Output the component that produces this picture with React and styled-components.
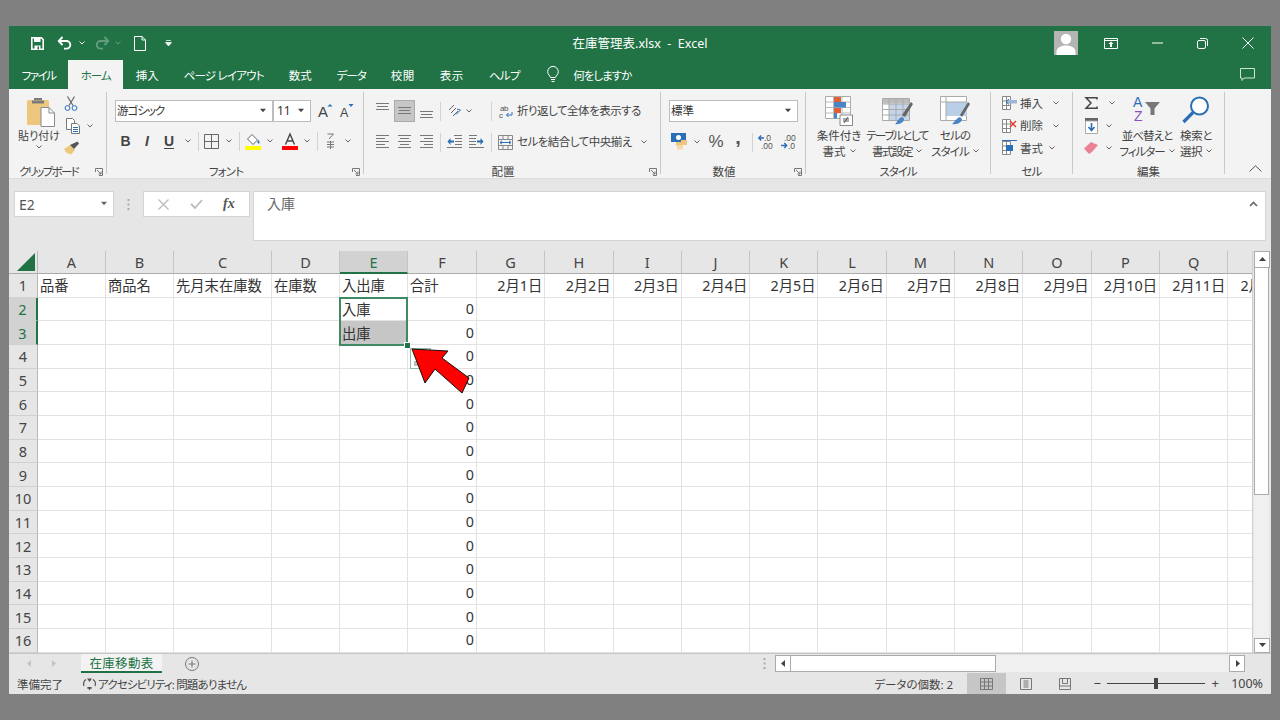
import React from 'react';
import styled, { createGlobalStyle } from 'styled-components';

const GREEN = '#217346';
const INK = '#444';
const UI_FONT = '"Noto Sans", "Noto Sans CJK JP", sans-serif';

const GlobalStyle = createGlobalStyle`
  html, body { margin: 0; height: 100%; background: #808080; }
  * { box-sizing: border-box; }
  body { font-family: ${UI_FONT}; font-feature-settings: "palt"; color: ${INK}; }
`;

const Page = styled.div`
  width: 1280px;
  height: 720px;
  padding: 26px 9px;
  background: #808080;
`;
const Excel = styled.div`
  width: 1262px;
  height: 668px;
  display: flex;
  flex-direction: column;
  overflow: hidden;
  background: #e6e6e6;
`;
const Glyph = styled.svg`
  display: block;
  flex: none;
  overflow: visible;
`;

/* title bar */
const TitleBar = styled.div`
  height: 34px;
  flex: none;
  display: grid;
  grid-template-columns: 1fr auto 1fr;
  align-items: center;
  background: ${GREEN};
  color: #fff;
`;
const Qat = styled.div`
  display: flex;
  align-items: center;
  padding-left: 13px;
`;
const QatSlot = styled.div`
  width: ${p => p.$w}px;
  display: flex;
  justify-content: center;
  opacity: ${p => (p.$dim ? 0.3 : 1)};
`;
const Title = styled.div`
  font-size: 12.5px;
  white-space: pre;
  font-feature-settings: normal;
  margin-top: -1px;
`;
const WindowControls = styled.div`
  display: flex;
  align-items: center;
  justify-content: flex-end;
  padding-right: 1px;
`;
const Avatar = styled.div`
  width: 24px;
  height: 24px;
  background: #b4b4b4;
  overflow: hidden;
  margin-right: 8px;
`;
const CtrlBtn = styled.div`
  width: ${p => p.$w || 45}px;
  display: flex;
  justify-content: center;
`;

/* ribbon tabs */
const TabBar = styled.div`
  height: 29px;
  flex: none;
  display: flex;
  align-items: stretch;
  background: ${GREEN};
`;
const Tab = styled.div`
  padding: 0 12.5px;
  display: flex;
  align-items: center;
  font-size: 11.5px;
  white-space: pre;
  letter-spacing: ${p => p.$ls || 0}px;
  color: ${p => (p.$active ? GREEN : '#fff')};
  background: ${p => (p.$active ? '#f3f3f3' : 'transparent')};
`;
const TellMe = styled.div`
  display: flex;
  align-items: center;
  gap: 14px;
  margin-left: 15px;
  color: #fff;
  font-size: 11.5px;
  letter-spacing: -1px;
`;
const ChatBtn = styled.div`
  margin-left: auto;
  padding-right: 16px;
  display: flex;
  align-items: center;
`;

/* ribbon */
const Ribbon = styled.div`
  height: 90px;
  flex: none;
  display: flex;
  padding: 3px 0 4px;
  background: #f3f3f3;
  border-bottom: 1px solid #dcdcdc;
  font-size: 11.5px;
  line-height: 15.5px;
`;
const Group = styled.div`
  width: ${p => p.$w}px;
  flex: none;
  display: flex;
  flex-direction: column;
  border-right: 1px solid #c8c8c8;
`;
const GroupBody = styled.div`
  flex: 1;
  min-height: 0;
  display: flex;
  padding-left: ${p => p.$pl || 0}px;
`;
const GroupFooter = styled.div`
  height: 12px;
  flex: none;
  margin-bottom: -4px;
  display: flex;
  align-items: center;
`;
const GroupLabel = styled.div`
  flex: 1;
  text-align: center;
  font-size: 11.5px;
  letter-spacing: ${p => p.$ls || 0}px;
  white-space: nowrap;
`;
const Launcher = styled.div`
  width: 18px;
  flex: none;
  display: flex;
  justify-content: flex-end;
  padding-right: 3px;
`;
const Collapse = styled.div`
  flex: 1;
  display: flex;
  align-items: flex-end;
  justify-content: flex-end;
  padding: 0 9px 2px 0;
`;
const Stack = styled.div`
  display: flex;
  flex-direction: column;
  padding-top: ${p => p.$pt || 0}px;
  gap: ${p => p.$gap || 0}px;
`;
const ToolRow = styled.div`
  display: flex;
  align-items: center;
  height: ${p => p.$h}px;
`;
const Tool = styled.div`
  width: ${p => p.$w}px;
  height: 100%;
  flex: none;
  display: flex;
  align-items: ${p => p.$v || 'center'};
  justify-content: center;
  padding: 3px 0 4px;
  margin-left: ${p => p.$ml || 0}px;
  background: ${p => (p.$on ? '#c6c6c6' : 'transparent')};
  border: ${p => (p.$on ? '1px solid #ababab' : 'none')};
  font-family: "Liberation Serif", serif;
`;
const ToolSep = styled.div`
  width: 1px;
  height: 19px;
  flex: none;
  margin: 0 ${p => p.$mr ?? 2}px 0 ${p => p.$ml ?? 2}px;
  background: #d2d2d2;
`;
const Select = styled.div`
  width: ${p => p.$w}px;
  height: 22px;
  flex: none;
  display: flex;
  align-items: center;
  justify-content: space-between;
  padding: 0 6px 0 ${p => p.$pl ?? 1}px;
  background: #fff;
  border: 1px solid #bdbdbd;
  font-size: ${p => p.$fs || 11.5}px;
  letter-spacing: ${p => p.$ls || 0}px;
  color: #333;
`;
const WideTool = styled.div`
  display: flex;
  align-items: center;
  padding-left: ${p => p.$pl}px;
  gap: 4px;
  white-space: nowrap;
  font-size: 11.5px;
  letter-spacing: -0.5px;
`;
const PasteColumn = styled.div`
  width: 40px;
  flex: none;
  display: flex;
  flex-direction: column;
  align-items: center;
  padding-top: 5px;
  gap: 1px;
  font-size: 11px;
  white-space: nowrap;
`;
const PasteGlyph = styled.div`
  margin-left: 4px;
`;
const ClipColumn = styled.div`
  display: flex;
  flex-direction: column;
  padding: 4px 0 0 5px;
  gap: 7px;
`;
const ClipRow = styled.div`
  display: flex;
  align-items: center;
  gap: 7px;
  margin-left: 2px;
`;
const LargeBtn = styled.div`
  width: ${p => p.$w}px;
  flex: none;
  display: flex;
  flex-direction: column;
  align-items: center;
  text-align: center;
  white-space: nowrap;
  letter-spacing: ${p => p.$ls || 0}px;
`;
const LargeIcon = styled.div`
  height: 36px;
  padding-top: 4px;
  display: flex;
  align-items: flex-start;
`;
const LabelLine = styled.div`
  display: flex;
  align-items: center;
  gap: 4px;
`;
const ListRow = styled.div`
  height: 22.5px;
  display: flex;
  align-items: center;
`;
const ListIcon = styled.div`
  width: ${p => p.$w || 16}px;
  display: flex;
  justify-content: center;
  flex: none;
`;
const ListText = styled.span`
  margin: 0 ${p => p.$mr}px 0 3px;
  font-size: 11.5px;
`;
const LargeText = styled.span`
  font-family: "Liberation Sans", sans-serif;
  font-size: ${p => (p.$b ? 20 : 17)}px;
  font-weight: ${p => (p.$b ? 700 : 400)};
  line-height: 1;
  color: #555;
  margin-top: ${p => (p.$b ? -10 : 0)}px;
`;
const EditColumn = styled.div`
  width: 34px;
  flex: none;
  display: flex;
  flex-direction: column;
`;
const EditChev = styled.div`
  margin-left: ${p => p.$ml}px;
`;

/* formula bar */
const FormulaBar = styled.div`
  height: 72px;
  flex: none;
  display: flex;
  align-items: flex-start;
  padding: 12px 5px 0;
  background: #e6e6e6;
`;
const NameBox = styled.div`
  width: 100px;
  height: 26px;
  display: flex;
  align-items: center;
  justify-content: space-between;
  padding: 0 6px 0 4px;
  background: #fff;
  border: 1px solid #d4d4d4;
  font-size: 14px;
  color: #555;
`;
const FormulaDots = styled.div`
  width: 29px;
  height: 26px;
  display: flex;
  align-items: center;
  justify-content: center;
`;
const FormulaButtons = styled.div`
  width: 107px;
  height: 26px;
  display: flex;
  align-items: center;
  justify-content: space-around;
  padding: 0 4px;
  background: #fff;
  border: 1px solid #d4d4d4;
`;
const FxLabel = styled.span`
  font-family: "Liberation Serif", serif;
  font-style: italic;
  font-weight: 700;
  font-size: 14px;
  color: #555;
`;
const FormulaInput = styled.div`
  flex: 1;
  height: 50px;
  margin-left: 3px;
  display: flex;
  justify-content: space-between;
  padding: 1px 7px 0 13px;
  background: #fff;
  border: 1px solid #d4d4d4;
  font-size: 14px;
  color: #666;
`;
const CollapseFormula = styled(Glyph)`
  margin-top: 8px;
`;

/* sheet */
const Workspace = styled.div`
  height: 402px;
  flex: none;
  display: flex;
`;
const SheetArea = styled.div`
  position: relative;
  width: 1243px;
  flex: none;
  overflow: hidden;
  background: #fff;
`;
const SheetGrid = styled.div`
  position: relative;
  display: grid;
  width: max-content;
  grid-template-columns: 29px 68px 68px 98px 68px 68px 69px repeat(12, 68.3px);
  grid-template-rows: 23px;
  grid-auto-rows: 23.67px;
  font-size: 14.3px;
  color: #333;
`;
const Corner = styled.div`
  display: flex;
  align-items: flex-end;
  justify-content: flex-end;
  padding: 0 2px 2px 0;
  background: #e6e6e6;
  border-right: 1px solid #b8b8b8;
  border-bottom: 1px solid #ababab;
`;
const ColHead = styled.div`
  display: flex;
  align-items: center;
  justify-content: center;
  font-size: 14.5px;
  color: ${p => (p.$on ? GREEN : INK)};
  background: ${p => (p.$on ? '#d2d2d2' : '#e6e6e6')};
  border-right: 1px solid #c4c4c4;
  border-bottom: ${p => (p.$on ? `2px solid ${GREEN}` : '1px solid #ababab')};
`;
const RowHead = styled.div`
  display: flex;
  align-items: center;
  justify-content: center;
  font-size: 14.5px;
  color: ${p => (p.$on ? GREEN : INK)};
  background: ${p => (p.$on ? '#d2d2d2' : '#e6e6e6')};
  border-right: ${p => (p.$on ? `2px solid ${GREEN}` : '1px solid #b8b8b8')};
  border-bottom: 1px solid #d0d0d0;
`;
const Cell = styled.div`
  display: flex;
  align-items: center;
  justify-content: ${p => (p.$right ? 'flex-end' : 'flex-start')};
  padding: 0 2px 1px 2px;
  white-space: nowrap;
  overflow: hidden;
  background: ${p => (p.$fill ? '#c6c6c6' : '#fff')};
  border-right: 1px solid #e2e2e2;
  border-bottom: 1px solid #e2e2e2;
`;
const Selection = styled.div`
  position: absolute;
  grid-column: 6 / 7;
  grid-row: 3 / 5;
  inset: -1px 0 -1px -1px;
  border: 2px solid #3f8a63;
  pointer-events: none;
`;
const FillHandle = styled.div`
  position: absolute;
  right: -5px;
  bottom: -5px;
  width: 7px;
  height: 7px;
  background: ${GREEN};
  border: 1px solid #fff;
`;
const QuickAnalysis = styled.div`
  position: absolute;
  left: 401px;
  top: 97px;
  width: 21px;
  height: 21px;
  background: #fff;
  border: 1px solid #8fb8a3;
  display: flex;
  align-items: flex-end;
  padding: 0 0 2px 3px;
`;
const CalloutArrow = styled(Glyph)`
  position: absolute;
  left: 402px;
  top: 96px;
`;

const VScroll = styled.div`
  width: 19px;
  flex: none;
  display: flex;
  flex-direction: column;
  padding: 0 2px 0 1px;
  background: #e6e6e6;
  border-left: 1px solid #d0d0d0;
`;
const ScrollBtn = styled.div`
  width: ${p => p.$w || 16}px;
  height: ${p => p.$h || 17}px;
  flex: none;
  display: flex;
  align-items: center;
  justify-content: center;
  background: #fff;
  border: 1px solid #ababab;
`;
const VThumb = styled.div`
  height: 227px;
  flex: none;
  background: #fff;
  border: 1px solid #ababab;
  border-top: none;
`;
const VTrack = styled.div`
  flex: 1;
  background: #f0f0f0;
`;

/* sheet tabs */
const SheetTabs = styled.div`
  height: 20px;
  flex: none;
  display: flex;
  align-items: center;
  background: #e6e6e6;
  border-top: 1px solid #c6c6c6;
`;
const TabNav = styled.div`
  width: 72px;
  flex: none;
  display: flex;
  padding-left: 17px;
  gap: 17px;
`;
const SheetTab = styled.div`
  width: 81px;
  height: 19px;
  flex: none;
  display: flex;
  align-items: center;
  justify-content: center;
  padding-bottom: 1px;
  background: #f3f3f3;
  border-bottom: 2px solid ${GREEN};
  color: ${GREEN};
  font-size: 12.5px;
  letter-spacing: 0.3px;
`;
const AddSheet = styled.div`
  margin-left: 23px;
  display: flex;
`;
const HScrollArea = styled.div`
  margin-left: auto;
  margin-right: 26px;
  display: flex;
  align-items: center;
  gap: 9px;
`;
const HScroll = styled.div`
  width: 470px;
  height: 17px;
  display: flex;
  background: #f0f0f0;
`;
const HThumb = styled.div`
  width: 205px;
  flex: none;
  background: #fff;
  border: 1px solid #ababab;
  border-left: none;
`;
const HTrack = styled.div`
  flex: 1;
`;

/* status bar */
const StatusBar = styled.div`
  height: 21px;
  flex: none;
  display: flex;
  align-items: center;
  background: #e6e6e6;
  font-size: 11.5px;
  color: #444;
  white-space: nowrap;
`;
const StatusText = styled.span`
  margin: 0 ${p => p.$mr || 0}px 0 ${p => p.$ml || 0}px;
`;
const A11y = styled.div`
  display: flex;
  align-items: center;
  gap: 1px;
  margin-left: 19px;
  letter-spacing: -0.85px;
`;
const StatusRight = styled.div`
  margin-left: auto;
  height: 100%;
  display: flex;
  align-items: center;
  padding-right: 8px;
`;
const ViewBtn = styled.div`
  width: ${p => p.$w || 39}px;
  height: 100%;
  display: flex;
  align-items: center;
  justify-content: center;
  background: ${p => (p.$on ? '#c6c6c6' : 'transparent')};
`;
const ZoomSlider = styled.div`
  width: 98px;
  height: 1px;
  margin: 0 6px;
  background: #444;
  display: flex;
  justify-content: center;
  align-items: center;
`;
const ZoomKnob = styled.div`
  width: 4px;
  height: 11px;
  background: #444;
`;
const ZoomSign = styled.span`
  width: 8px;
  margin-left: ${p => p.$ml || 0}px;
  text-align: center;
  font-size: 13px;
  line-height: 1;
`;
const ZoomValue = styled.span`
  margin-left: 12px;
  font-size: 12.5px;
`;
const BoldMark = styled.span`
  font-size: 14px;
  font-weight: ${p => (p.$b ? 700 : 400)};
  font-style: ${p => (p.$i ? 'italic' : 'normal')};
  font-family: "Liberation Sans", sans-serif;
  color: #444;
  border-bottom: ${p => (p.$u ? '1.5px solid #444' : 'none')};
  line-height: 14px;
`;

/* drawings */
const Chevron = ({ color = '#666' }) => (
  <Glyph width="6" height="4" viewBox="0 0 6 4"><path d="M.5.5 3 3 5.500.5" fill="none" stroke={color} /></Glyph>
);
const Caret = ({ dir = 'down', color = '#444', s = 7 }) => {
  const d = { down: 'M0 1h7L3.500 5z', up: 'M0 5h7L3.500 1z', left: 'M5 0v7L1 3.500z', right: 'M2 0v7l4-3.500z' }[dir];
  return <Glyph width={s} height={s} viewBox="0 0 7 7"><path d={d} fill={color} /></Glyph>;
};
const LauncherIcon = () => (
  <Glyph width="8" height="8" viewBox="0 0 8 8">
    <path d="M.5 4V.5H7.500V7.500H4M2 2l4 4M6 3.500V6H3.500" fill="none" stroke="#777" />
  </Glyph>
);
const SaveIcon = () => (
  <Glyph width="13" height="13" viewBox="0 0 13 13">
    <path d="M.8.8h9.600l1.800 1.800v9.600H.8z" fill="none" stroke="#fff" strokeWidth="1.600" />
    <path d="M3 1h6.500v4H3z" fill="#fff" /><path d="M3.500 8.500h6v4h-6z" fill="#fff" /><path d="M6.500 9.500h1.500v3H6.500z" fill={GREEN} />
  </Glyph>
);
const UndoIcon = ({ flip }) => (
  <Glyph width="15" height="14" viewBox="0 0 15 14" style={flip ? { transform: 'scaleX(-1)' } : undefined}>
    <path d="M5.500 1 1.800 5l3.700 4M2 5h7.500a3.700 3.700 0 0 1 0 7.600H7" fill="none" stroke="#fff" strokeWidth="1.900" />
  </Glyph>
);
const NewIcon = () => (
  <Glyph width="12" height="15" viewBox="0 0 12 15">
    <path d="M.5.5h7.500l3.500 3.500v10.500H.5zM8 .5V4h3.500" fill="none" stroke="#fff" />
  </Glyph>
);
const QatMore = () => (
  <Glyph width="7" height="7" viewBox="0 0 7 7"><path d="M1 .5h5M.5 2.500h6L3.500 6z" stroke="#fff" fill="#fff" strokeWidth=".7" /></Glyph>
);
const UserFigure = () => (
  <Glyph width="24" height="24" viewBox="0 0 24 24">
    <circle cx="12" cy="8" r="5.200" fill="#fff" /><path d="M2.500 24v-3c0-4 4-6.500 9.500-6.500s9.500 2.500 9.500 6.500v3z" fill="#fff" />
  </Glyph>
);
const DisplayIcon = () => (
  <Glyph width="14" height="11" viewBox="0 0 14 11">
    <path d="M.5.5h13v10H.5zM.5 2.500h13" fill="none" stroke="#fff" /><path d="M7 3.500 4.500 6H6v3h2V6h1.500z" fill="#fff" />
  </Glyph>
);
const MinIcon = () => <Glyph width="11" height="2" viewBox="0 0 11 2"><path d="M0 1h11" stroke="#fff" /></Glyph>;
const RestoreIcon = () => (
  <Glyph width="11" height="11" viewBox="0 0 11 11">
    <rect x=".5" y="2.500" width="8" height="8" rx="1.500" fill="none" stroke="#fff" /><path d="M3 .5h5.500a2 2 0 0 1 2 2V8" fill="none" stroke="#fff" />
  </Glyph>
);
const CloseIcon = () => <Glyph width="12" height="12" viewBox="0 0 12 12"><path d="M.5.5l11 11M11.500.5l-11 11" stroke="#fff" /></Glyph>;
const BulbIcon = () => (
  <Glyph width="12" height="17" viewBox="0 0 12 17">
    <path d="M3.500 11.500C3 9.500.7 8.500.7 5.700a5.300 5.300 0 0 1 10.600 0c0 2.800-2.300 3.800-2.800 5.800zM4 13.500h4M4.500 15.500h3" fill="none" stroke="#fff" />
  </Glyph>
);
const ChatIcon = () => (
  <Glyph width="15" height="13" viewBox="0 0 15 13">
    <path d="M.5.5h14v9.500H4L2 12.500V10H.5z" fill="none" stroke="#cfe3d8" />
  </Glyph>
);
const PasteIcon = () => (
  <Glyph width="28" height="30" viewBox="0 0 28 30">
    <rect x="0" y="3" width="22" height="25" rx="1.500" fill="#eec77f" />
    <path d="M7 3h8V1h-8z M5 3.500h12v3H5z" fill="#7b7b7b" />
    <path d="M14 10.500h8l5.500 5.500v13.500H14z" fill="#fff" stroke="#8a8a8a" />
    <path d="M22 10.500V16h5.500" fill="none" stroke="#8a8a8a" />
  </Glyph>
);
const ScissorsIcon = () => (
  <Glyph width="14" height="15" viewBox="0 0 14 15">
    <path d="M3.500 .5 9 9.500M10.500.5 5 9.500" stroke="#666" strokeWidth="1.200" />
    <circle cx="3.500" cy="12" r="2.400" fill="none" stroke="#2a6fb5" /><circle cx="10.500" cy="12" r="2.400" fill="none" stroke="#2a6fb5" />
  </Glyph>
);
const CopyIcon = () => (
  <Glyph width="14" height="16" viewBox="0 0 14 16">
    <path d="M.5.5h6l2 2v9h-8z" fill="#fff" stroke="#777" /><path d="M5.500 5.500h5.500l2.500 2.500v7.500h-8z" fill="#fff" stroke="#777" />
    <path d="M7 9.500h5M7 11.500h5M7 13.500h5" stroke="#2a6fb5" />
  </Glyph>
);
const BrushIcon = () => (
  <Glyph width="16" height="14" viewBox="0 0 16 14">
    <path d="M0 8 6 4l5 5-4 4.500C4 13 1 11 0 8z" fill="#eec77f" /><path d="m6 4 4 4 5-5.500L13.500.5z" fill="#555" />
  </Glyph>
);
const GrowA = ({ big }) => (
  <Glyph width="15" height="15" viewBox="0 0 15 15">
    <text x={big ? 0 : 1} y="14" fontFamily="Liberation Sans" fontSize={big ? 15 : 12.500} fill="#444">A</text>
    <path d={big ? 'M12 1l2.500 2.500h-5z' : 'M12 4 14.500 1h-5z'} fill="#2a6fb5" />
  </Glyph>
);
const BordersIcon = () => (
  <Glyph width="15" height="15" viewBox="0 0 15 15"><path d="M.5.5h14v14H.5zM7.500.5v14M.5 7.500h14" fill="none" stroke="#666" /></Glyph>
);
const FillIcon = () => (
  <Glyph width="16" height="17" viewBox="0 0 16 17">
    <path d="M7 1.500 12.500 7 8 11.500 2.500 6z" fill="#fff" stroke="#666" /><path d="M13 6.500c1 1.500 2 2.500 1.500 3.500s-2 .5-2-.8z" fill="#2a6fb5" />
    <path d="M0 13h16v4H0z" fill="#ffff00" />
  </Glyph>
);
const FontColorIcon = () => (
  <Glyph width="16" height="17" viewBox="0 0 16 17">
    <path d="M3.500 11.500 8 1l4.500 10.500M5 8h6" fill="none" stroke="#444" strokeWidth="1.400" /><path d="M0 13h16v4H0z" fill="#ff0000" />
  </Glyph>
);
const PhoneticIcon = () => (
  <Glyph width="11" height="17" viewBox="0 0 11 17">
    <path d="M2.500 1h6L4 6M2 9h7M2 11.500h7M2 14h7M5.500 8v8" fill="none" stroke="#777" />
  </Glyph>
);
const VAlignIcon = () => <Glyph width="13" height="7" viewBox="0 0 13 7"><path d="M0 .5h13M1 3.500h11M0 6.500h13" stroke="#777" /></Glyph>;
const HAlignIcon = ({ kind }) => {
  const d = {
    left: 'M0 .5h13M0 3.500h9M0 6.500h13M0 9.500h9M0 12.500h13',
    center: 'M0 .5h13M2 3.500h9M0 6.500h13M2 9.500h9M0 12.500h13',
    right: 'M0 .5h13M4 3.500h9M0 6.500h13M4 9.500h9M0 12.500h13',
  }[kind];
  return <Glyph width="13" height="13" viewBox="0 0 13 13"><path d={d} stroke="#777" /></Glyph>;
};
const OrientIcon = () => (
  <Glyph width="13" height="13" viewBox="0 0 13 13">
    <path d="M1 6 6 1M3 9l5-5M5 12l5-5" stroke="#666" /><path d="M8 10.500 12.500 6 9 5" fill="none" stroke="#2a6fb5" />
  </Glyph>
);
const IndentIcon = ({ flip }) => (
  <Glyph width="15" height="13" viewBox="0 0 15 13" style={flip ? { transform: 'scaleX(-1)' } : undefined}>
    <path d="M7 .5h8M8 3.500h7M8 6.500h7M8 9.500h7M0 12.500h15" stroke="#777" /><path d="M3.500 3 .5 6.500l3 3.500V7.500H7v-2H3.500z" fill="#2a6fb5" />
  </Glyph>
);
const WrapIcon = () => (
  <Glyph width="14" height="14" viewBox="0 0 14 14">
    <text x="1" y="6.500" fontSize="8" fontFamily="Liberation Sans" fill="#555">ab</text>
    <text x="0" y="13.500" fontSize="8" fontFamily="Liberation Sans" fill="#555">c</text>
    <path d="M13 8v3H7.500M9.500 9 7.500 11l2 2" fill="none" stroke="#2a6fb5" />
  </Glyph>
);
const MergeIcon = () => (
  <Glyph width="15" height="15" viewBox="0 0 15 15">
    <path d="M.5.500h14v14H.5zM.5 4.500h14M.5 10.500h14M5 .5v4M10 .5v4M5 10.500v4M10 10.500v4" fill="none" stroke="#888" />
    <path d="M2 7.500h11M4 5.800 2 7.500l2 1.700M11 5.800l2 1.700-2 1.700" fill="#f3f3f3" stroke="#2a6fb5" />
  </Glyph>
);
const CurrencyIcon = () => (
  <Glyph width="17" height="17" viewBox="0 0 17 17">
    <path d="M0 0h15v9H0z" fill="#2a6fb5" /><circle cx="7.500" cy="4.500" r="2.500" fill="#fff" />
    <path d="M5 9h6v4H5z M10 7h6v5h-6z" fill="#eec77f" /><path d="M6 12h6v4.500H6z" fill="#f3dba9" />
  </Glyph>
);
const DecreaseDecimals = () => (
  <Glyph width="15" height="15" viewBox="0 0 15 15">
    <text x="6" y="6.500" fontSize="8.500" fontFamily="Liberation Sans" fill="#555">.0</text>
    <text x="3" y="14.500" fontSize="8.500" fontFamily="Liberation Sans" fill="#555">.00</text>
    <path d="M6 4H1M3.200 1.500 .8 4l2.400 2.500" fill="none" stroke="#2a6fb5" strokeWidth="1.400" />
  </Glyph>
);
const IncreaseDecimals = () => (
  <Glyph width="15" height="15" viewBox="0 0 15 15">
    <text x="3" y="6.500" fontSize="8.500" fontFamily="Liberation Sans" fill="#555">.00</text>
    <text x="7" y="14.500" fontSize="8.500" fontFamily="Liberation Sans" fill="#555">.0</text>
    <path d="M0 11.500h5.500M3.300 9l2.400 2.500L3.300 14" fill="none" stroke="#2a6fb5" strokeWidth="1.400" />
  </Glyph>
);
const CondFormatIcon = () => (
  <Glyph width="28" height="30" viewBox="0 0 28 30">
    <path d="M.5.500h25v22H.5z" fill="#fff" stroke="#aaa" />
    <path d="M.5 6h25M.5 11.500h25M.5 17h25M8.500.5v22M17 .5v22" stroke="#bbb" />
    <path d="M9 1h7v5H9zM9 12h7v5H9z" fill="#e0603a" /><path d="M9 6h12v5.500H9zM9 17h3v5.500H9z" fill="#4a86c5" />
    <path d="M15 19h12.500v10.500H15z" fill="#fff" stroke="#888" /><path d="M18 25h6M18 23h6M23 21l-4 6" stroke="#555" />
  </Glyph>
);
const TableIcon = () => (
  <Glyph width="31" height="30" viewBox="0 0 31 30">
    <path d="M.5 2.500h27v22H.5z" fill="#fff" stroke="#aaa" /><path d="M1 3h26v4.500H1z" fill="#bcbcbc" />
    <path d="M7 8h20v16H7z" fill="#c4d5ea" />
    <path d="M.5 8h27M.5 13.500h27M.5 19h27M7 2.500v22M14 2.500v22M21 2.500v22" stroke="#aaa" />
    <path d="m20 19 9-13 2 2-8 13z" fill="#666" /><path d="M13 28c2-1 3-6 7-7l2 2c0 3-4 6-9 5z" fill="#4a86c5" />
  </Glyph>
);
const CellStyleIcon = () => (
  <Glyph width="30" height="30" viewBox="0 0 30 30">
    <path d="M.5.500h26v24H.5z" fill="#fff" stroke="#aaa" /><path d="M6 6h21v14H6z" fill="#b8cfe8" />
    <path d="M.5 6h26M6 .5v24" stroke="#aaa" />
    <path d="m20 19 8-13 2 2-8 13z" fill="#666" /><path d="M12 28c2-1 4-6 8-7l2 2c0 3-4 6-10 5z" fill="#4a86c5" />
  </Glyph>
);
const CellOpIcon = ({ kind }) => (
  <Glyph width="15" height="16" viewBox="0 0 15 16">
    <path d="M.5 1.500h8v13h-8zM.5 6h8M.5 10.500h8M4.500 1.500v13" fill="#fff" stroke="#888" />
    {kind === 'insert' && <><path d="M5 5h10v3.500H5z" fill="#9db7d6" /><path d="M7 4 4 6.800 7 9.500" fill="none" stroke="#2a6fb5" /></>}
    {kind === 'delete' && <path d="M8 3l6 6M14 3 8 9" stroke="#e0402a" strokeWidth="1.500" />}
    {kind === 'format' && <><path d="M4 5h7v6H4z" fill="#2a6fb5" /><path d="M0 .5h15" stroke="#2a6fb5" /></>}
  </Glyph>
);
const SigmaIcon = () => (
  <Glyph width="13" height="12" viewBox="0 0 13 12"><path d="M12 2.500V.8H1l5 5.200-5 5.200h11V9.500" fill="none" stroke="#444" strokeWidth="1.500" /></Glyph>
);
const FillDownIcon = () => (
  <Glyph width="13" height="16" viewBox="0 0 13 16">
    <path d="M0 0h13v3H0z" fill="#666" /><path d="M.5 3h12v12.500H.5z" fill="#fff" stroke="#aaa" />
    <path d="M6.500 5v7M3.500 9l3 3.500 3-3.500" fill="none" stroke="#2a6fb5" strokeWidth="1.600" />
  </Glyph>
);
const EraserIcon = () => (
  <Glyph width="14" height="12" viewBox="0 0 14 12">
    <path d="M0 6.500 7 0l7 3-6 7-3 2z" fill="#ea8296" />
  </Glyph>
);
const SortIcon = () => (
  <Glyph width="28" height="30" viewBox="0 0 28 30">
    <text x="0" y="11" fontSize="14" fontFamily="Liberation Sans" fill="#2a6fb5">A</text>
    <text x="1" y="25" fontSize="14" fontFamily="Liberation Sans" fill="#8a4fc0">Z</text>
    <path d="M12 6h15l-5.500 6.500V19h-4v-6.500z" fill="#777" />
  </Glyph>
);
const SearchIcon = () => (
  <Glyph width="28" height="28" viewBox="0 0 28 28">
    <circle cx="17.500" cy="10" r="8.500" fill="#fff" stroke="#2a6fb5" strokeWidth="2" />
    <path d="M11 16.500 1.500 26" stroke="#2a6fb5" strokeWidth="3.200" />
  </Glyph>
);
const Triangle = () => (
  <Glyph width="18" height="18" viewBox="0 0 18 18"><path d="M18 0v18H0z" fill={GREEN} /></Glyph>
);
const Dots = () => (
  <Glyph width="3" height="11" viewBox="0 0 3 11"><path d="M.5 0h2v2h-2zM.5 4.500h2v2h-2zM.5 9h2v2h-2z" fill="#aaa" /></Glyph>
);
const CancelIcon = () => <Glyph width="11" height="11" viewBox="0 0 11 11"><path d="M.5.5l10 10M10.500.5l-10 10" stroke="#bbb" strokeWidth="1.300" /></Glyph>;
const CheckIcon = () => <Glyph width="13" height="10" viewBox="0 0 13 10"><path d="M1 5l4 4 7-8" fill="none" stroke="#bbb" strokeWidth="1.800" /></Glyph>;
const PlusCircle = () => (
  <Glyph width="14" height="14" viewBox="0 0 14 14"><circle cx="7" cy="7" r="6.500" fill="none" stroke="#777" /><path d="M7 3.500v7M3.500 7h7" stroke="#777" /></Glyph>
);
const A11yIcon = () => (
  <Glyph width="15" height="14" viewBox="0 0 15 14">
    <path d="M4 2.500a5.500 5.500 0 0 0-2 6.500M11 2.500a5.500 5.500 0 0 1 2 6.500M5 11h5" fill="none" stroke="#555" strokeWidth="1.200" />
    <path d="M5 1.500h5L7.500 5zM5.500 10l2 3.500 2-3.500z" fill="#555" />
  </Glyph>
);
const NormalView = () => (
  <Glyph width="13" height="12" viewBox="0 0 13 12"><path d="M.5.500h12v11H.5zM.5 4h12M.5 8h12M4.500.5v11M8.500.5v11" fill="none" stroke="#777" /></Glyph>
);
const PageView = () => (
  <Glyph width="12" height="12" viewBox="0 0 12 12"><path d="M.5.500h11v11H.5zM3.500 3h5M3.500 5h5M3.500 7h5M3.500 9h5" fill="none" stroke="#777" /></Glyph>
);
const BreakView = () => (
  <Glyph width="12" height="12" viewBox="0 0 12 12"><path d="M.5.500h11v11H.5zM.5 8h11M3.500.5V5.500h5V.5" fill="none" stroke="#777" /></Glyph>
);

/* sheet data */
const COLS = 'ABCDEFGHIJKLMNOPQR'.split('');
const HEADINGS = { A: '品番', B: '商品名', C: '先月末在庫数', D: '在庫数', E: '入出庫', F: '合計' };
const ROWS = Array.from({ length: 16 }, (_, i) => i + 1);

function cellValue(col, row) {
  if (row === 1) {
    if (HEADINGS[col]) return HEADINGS[col];
    return `2月${COLS.indexOf(col) - 5}日`;
  }
  if (col === 'E' && row === 2) return '入庫';
  if (col === 'E' && row === 3) return '出庫';
  if (col === 'F') return '0';
  return '';
}

function Sheet() {
  return (
    <SheetGrid>
      <Corner><Triangle /></Corner>
      {COLS.map(c => <ColHead key={c} $on={c === 'E'}>{c}</ColHead>)}
      {ROWS.map(r => (
        <React.Fragment key={r}>
          <RowHead $on={r === 2 || r === 3}>{r}</RowHead>
          {COLS.map(c => {
            const numeric = (c === 'F' && r > 1) || (r === 1 && !HEADINGS[c]);
            return (
              <Cell key={c} $right={numeric} $fill={c === 'E' && r === 3}>{cellValue(c, r)}</Cell>
            );
          })}
        </React.Fragment>
      ))}
      <Selection><FillHandle /></Selection>
    </SheetGrid>
  );
}

function Footer({ label, launcher, ls }) {
  return (
    <GroupFooter>
      <GroupLabel $ls={ls}>{label}</GroupLabel>
      {launcher && <Launcher><LauncherIcon /></Launcher>}
    </GroupFooter>
  );
}

function Large({ w, ls, icon, top, bottom }) {
  return (
    <LargeBtn $w={w} $ls={ls}>
      <LargeIcon>{icon}</LargeIcon>
      <div>{top}</div>
      <LabelLine>{bottom}<Chevron /></LabelLine>
    </LargeBtn>
  );
}

function ListItem({ icon, text, mr }) {
  return (
    <ListRow>
      <ListIcon>{icon}</ListIcon>
      <ListText $mr={mr}>{text}</ListText>
      <Chevron />
    </ListRow>
  );
}

export default function App() {
  return (
    <Page>
      <GlobalStyle />
      <Excel>
        <TitleBar>
          <Qat>
            <QatSlot $w={31}><SaveIcon /></QatSlot>
            <QatSlot $w={22}><UndoIcon /></QatSlot>
            <QatSlot $w={13}><Chevron color="#fff" /></QatSlot>
            <QatSlot $w={28} $dim><UndoIcon flip /></QatSlot>
            <QatSlot $w={4} $dim><Chevron color="#fff" /></QatSlot>
            <QatSlot $w={39}><NewIcon /></QatSlot>
            <QatSlot $w={18}><QatMore /></QatSlot>
          </Qat>
          <Title>在庫管理表.xlsx  -  Excel</Title>
          <WindowControls>
            <Avatar><UserFigure /></Avatar>
            <CtrlBtn $w={49}><DisplayIcon /></CtrlBtn>
            <CtrlBtn><MinIcon /></CtrlBtn>
            <CtrlBtn><RestoreIcon /></CtrlBtn>
            <CtrlBtn><CloseIcon /></CtrlBtn>
          </WindowControls>
        </TitleBar>

        <TabBar>
          <Tab $ls={-1.4}>ファイル</Tab>
          <Tab $active $ls={-1}>ホーム</Tab>
          <Tab>挿入</Tab>
          <Tab $ls={-0.8}>ページ レイアウト</Tab>
          <Tab>数式</Tab>
          <Tab $ls={-1}>データ</Tab>
          <Tab $ls={0.5}>校閲</Tab>
          <Tab $ls={0.5}>表示</Tab>
          <Tab $ls={-0.7}>ヘルプ</Tab>
          <TellMe><BulbIcon />何をしますか</TellMe>
          <ChatBtn><ChatIcon /></ChatBtn>
        </TabBar>

        <Ribbon>
          <Group $w={98}>
            <GroupBody $pl={10}>
              <PasteColumn>
                <PasteGlyph><PasteIcon /></PasteGlyph>
                <span>貼り付け</span>
                <Chevron />
              </PasteColumn>
              <ClipColumn>
                <ScissorsIcon />
                <ClipRow><CopyIcon /><Chevron /></ClipRow>
                <BrushIcon />
              </ClipColumn>
            </GroupBody>
            <Footer label="クリップボード" launcher ls={-1.7} />
          </Group>

          <Group $w={257}>
            <GroupBody $pl={8}>
              <Stack $pt={8} $gap={10}>
                <ToolRow $h={22}>
                  <Select $w={158} $ls={-1}>游ゴシック<Caret s={6} /></Select>
                  <Select $w={38} $fs={12} $pl={3}>11<Caret s={6} /></Select>
                  <Tool $w={15} $ml={7}><GrowA big /></Tool>
                  <Tool $w={15} $ml={6}><GrowA /></Tool>
                </ToolRow>
                <ToolRow $h={19}>
                  <Tool $w={21}><BoldMark $b>B</BoldMark></Tool>
                  <Tool $w={22}><BoldMark $i $b>I</BoldMark></Tool>
                  <Tool $w={22}><BoldMark $u $b>U</BoldMark></Tool>
                  <Tool $w={16}><Chevron /></Tool>
                  <ToolSep />
                  <Tool $w={20}><BordersIcon /></Tool>
                  <Tool $w={16}><Chevron /></Tool>
                  <ToolSep />
                  <Tool $w={22}><FillIcon /></Tool>
                  <Tool $w={12}><Chevron /></Tool>
                  <Tool $w={27}><FontColorIcon /></Tool>
                  <Tool $w={8}><Chevron /></Tool>
                  <ToolSep $ml={6} />
                  <Tool $w={20}><PhoneticIcon /></Tool>
                  <Tool $w={16}><Chevron /></Tool>
                </ToolRow>
              </Stack>
            </GroupBody>
            <Footer label="フォント" launcher ls={-0.8} />
          </Group>

          <Group $w={297}>
            <GroupBody $pl={8}>
              <Stack $pt={8} $gap={10}>
                <ToolRow $h={22}>
                  <Tool $w={21} $v="flex-start"><VAlignIcon /></Tool>
                  <Tool $w={21} $ml={1} $on><VAlignIcon /></Tool>
                  <Tool $w={21} $ml={1} $v="flex-end"><VAlignIcon /></Tool>
                  <ToolSep $ml={3} />
                  <Tool $w={22}><OrientIcon /></Tool>
                  <Tool $w={8}><Chevron /></Tool>
                  <ToolSep $ml={18} />
                  <WideTool $pl={5}><WrapIcon />折り返して全体を表示する</WideTool>
                </ToolRow>
                <ToolRow $h={20}>
                  <Tool $w={21}><HAlignIcon kind="left" /></Tool>
                  <Tool $w={21} $ml={1}><HAlignIcon kind="center" /></Tool>
                  <Tool $w={21} $ml={1}><HAlignIcon kind="right" /></Tool>
                  <ToolSep $ml={3} />
                  <Tool $w={22}><IndentIcon /></Tool>
                  <Tool $w={22}><IndentIcon flip /></Tool>
                  <ToolSep $ml={4} />
                  <WideTool $pl={4}><MergeIcon />セルを結合して中央揃え</WideTool>
                  <Tool $w={24}><Chevron /></Tool>
                </ToolRow>
              </Stack>
            </GroupBody>
            <Footer label="配置" launcher />
          </Group>

          <Group $w={145}>
            <GroupBody $pl={8}>
              <Stack $pt={8} $gap={10}>
                <Select $w={129}>標準<Caret s={6} /></Select>
                <ToolRow $h={20}>
                  <Tool $w={21}><CurrencyIcon /></Tool>
                  <Tool $w={14}><Chevron /></Tool>
                  <Tool $w={24}><LargeText>%</LargeText></Tool>
                  <Tool $w={20}><LargeText $b>,</LargeText></Tool>
                  <ToolSep $ml={4} />
                  <Tool $w={20}><DecreaseDecimals /></Tool>
                  <Tool $w={26}><IncreaseDecimals /></Tool>
                </ToolRow>
              </Stack>
            </GroupBody>
            <Footer label="数値" launcher />
          </Group>

          <Group $w={185}>
            <GroupBody $pl={3}>
              <Large w={60} icon={<CondFormatIcon />} top="条件付き" bottom="書式" />
              <Large w={56} ls={-1.5} icon={<TableIcon />} top="テーブルとして" bottom="書式設定" />
              <Large w={60} ls={-0.8} icon={<CellStyleIcon />} top="セルの" bottom="スタイル" />
            </GroupBody>
            <Footer label="スタイル" ls={-1} />
          </Group>

          <Group $w={82}>
            <GroupBody $pl={10}>
              <Stack>
                <ListItem icon={<CellOpIcon kind="insert" />} text="挿入" mr={10} />
                <ListItem icon={<CellOpIcon kind="delete" />} text="削除" mr={10} />
                <ListItem icon={<CellOpIcon kind="format" />} text="書式" mr={6} />
              </Stack>
            </GroupBody>
            <Footer label="セル" ls={-0.8} />
          </Group>

          <Group $w={152}>
            <GroupBody $pl={10}>
              <EditColumn>
                <ListRow><ListIcon $w={16}><SigmaIcon /></ListIcon><EditChev $ml={10}><Chevron /></EditChev></ListRow>
                <ListRow><ListIcon $w={16}><FillDownIcon /></ListIcon><EditChev $ml={7}><Chevron /></EditChev></ListRow>
                <ListRow><ListIcon $w={16}><EraserIcon /></ListIcon><EditChev $ml={7}><Chevron /></EditChev></ListRow>
              </EditColumn>
              <Large w={60} ls={-1} icon={<SortIcon />} top="並べ替えと" bottom="フィルター" />
              <Large w={38} ls={-0.4} icon={<SearchIcon />} top="検索と" bottom="選択" />
            </GroupBody>
            <Footer label="編集" />
          </Group>

          <Collapse>
            <Glyph width="13" height="7" viewBox="0 0 13 7"><path d="M.5 6.500 6.500.8l6 5.700" fill="none" stroke="#555" /></Glyph>
          </Collapse>
        </Ribbon>

        <FormulaBar>
          <NameBox>E2<Caret s={6} color="#666" /></NameBox>
          <FormulaDots><Dots /></FormulaDots>
          <FormulaButtons><CancelIcon /><CheckIcon /><FxLabel>fx</FxLabel></FormulaButtons>
          <FormulaInput>
            入庫
            <CollapseFormula width="9" height="6" viewBox="0 0 9 6"><path d="M1 5 4.500 1.500 8 5" fill="none" stroke="#666" strokeWidth="1.600" /></CollapseFormula>
          </FormulaInput>
        </FormulaBar>

        <Workspace>
          <SheetArea>
            <Sheet />
            <QuickAnalysis>
              <Glyph width="5" height="5" viewBox="0 0 5 5"><path d="M0 0h5v5H0z" fill="#bbb" /></Glyph>
            </QuickAnalysis>
            <CalloutArrow width="60" height="48" viewBox="0 0 60 48">
              <path d="M1 2 37 4 31 11 58 31 51 46 24 22 14 36z" fill="#ff0000" stroke="#111" strokeWidth="1" />
            </CalloutArrow>
          </SheetArea>
          <VScroll>
            <ScrollBtn><Caret dir="up" /></ScrollBtn>
            <VThumb />
            <VTrack />
            <ScrollBtn $h={15}><Caret /></ScrollBtn>
          </VScroll>
        </Workspace>

        <SheetTabs>
          <TabNav>
            <Caret dir="left" color="#c4c4c4" />
            <Caret dir="right" color="#c4c4c4" />
          </TabNav>
          <SheetTab>在庫移動表</SheetTab>
          <AddSheet><PlusCircle /></AddSheet>
          <HScrollArea>
            <Dots />
            <HScroll>
              <ScrollBtn $w={16} $h={17}><Caret dir="left" /></ScrollBtn>
              <HThumb />
              <HTrack />
              <ScrollBtn $w={16} $h={17}><Caret dir="right" /></ScrollBtn>
            </HScroll>
          </HScrollArea>
        </SheetTabs>

        <StatusBar>
          <StatusText $ml={8}>準備完了</StatusText>
          <A11y><A11yIcon />アクセシビリティ: 問題ありません</A11y>
          <StatusRight>
            <StatusText $mr={14}>データの個数: 2</StatusText>
            <ViewBtn $on><NormalView /></ViewBtn>
            <ViewBtn><PageView /></ViewBtn>
            <ViewBtn><BreakView /></ViewBtn>
            <ZoomSign $ml={9}>−</ZoomSign>
            <ZoomSlider><ZoomKnob /></ZoomSlider>
            <ZoomSign>+</ZoomSign>
            <ZoomValue>100%</ZoomValue>
          </StatusRight>
        </StatusBar>
      </Excel>
    </Page>
  );
}
